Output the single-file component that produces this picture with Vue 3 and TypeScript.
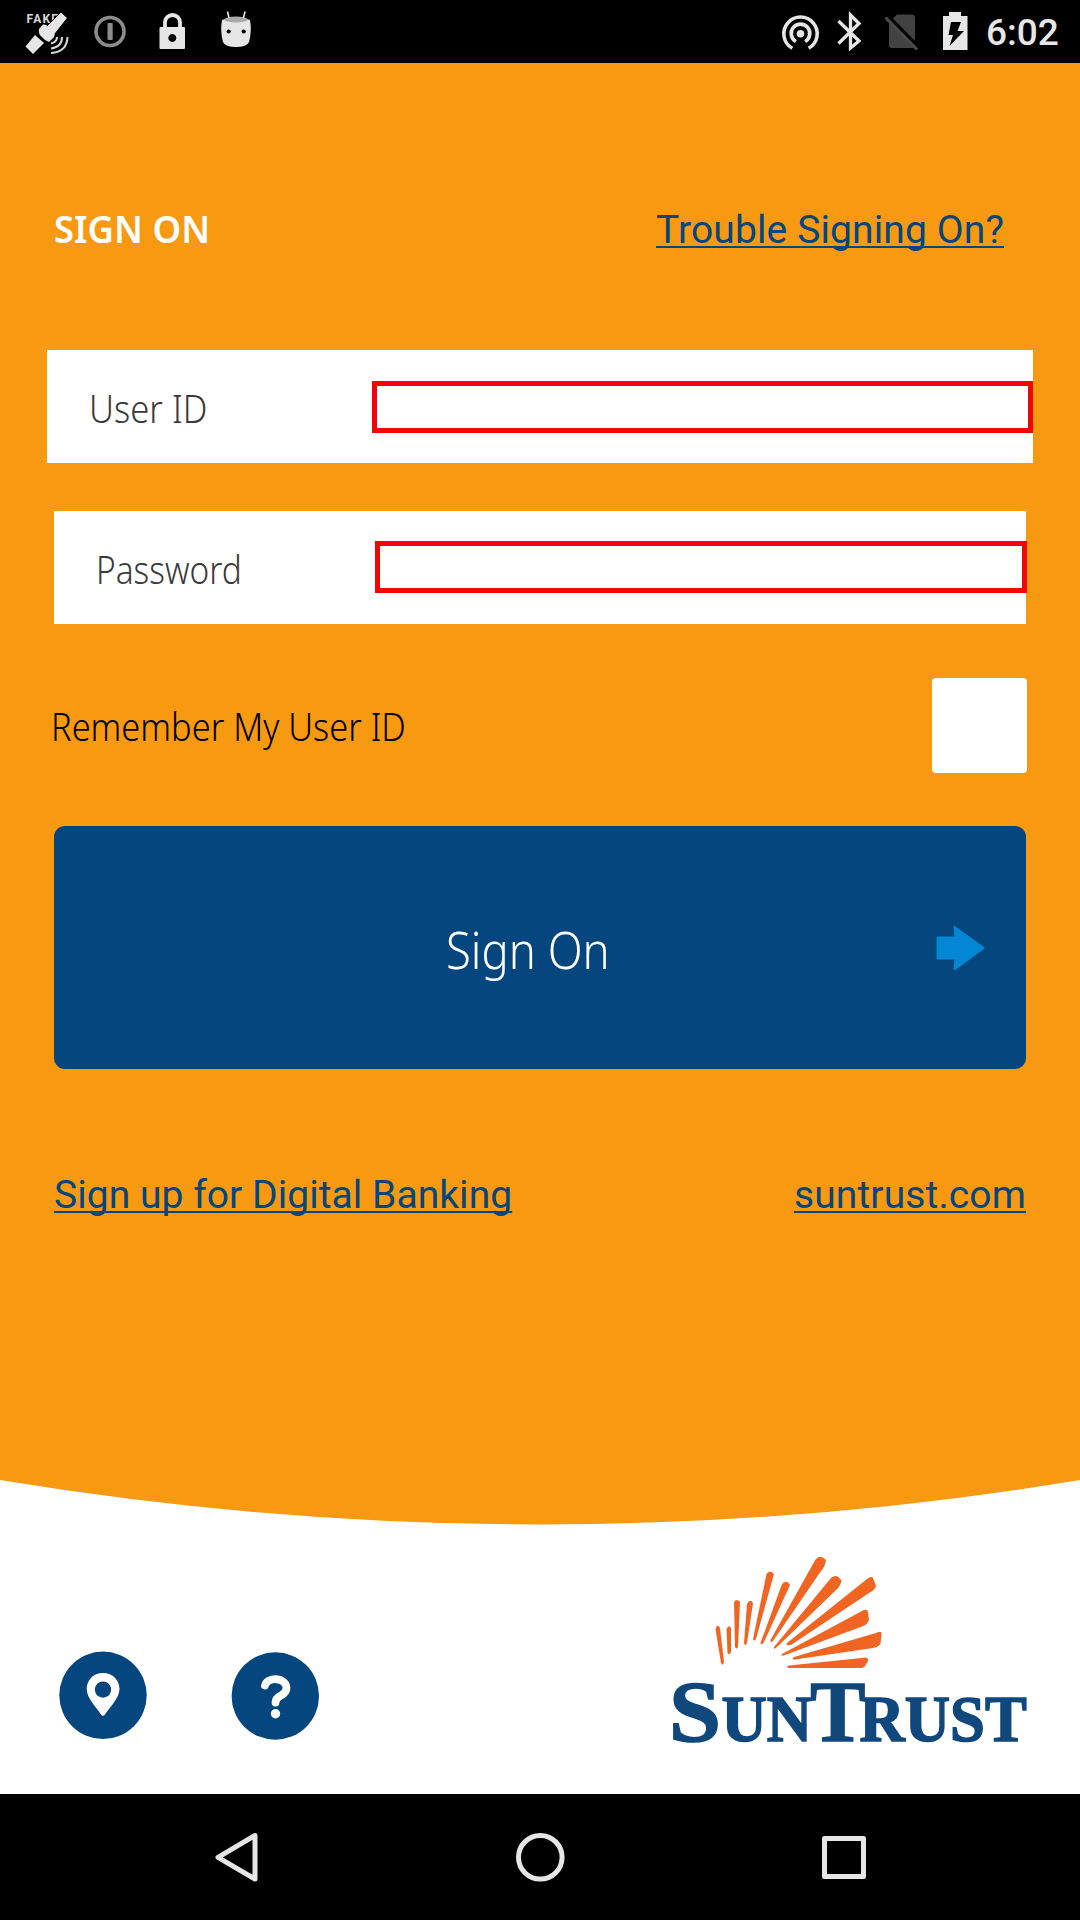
<script setup lang="ts">
interface Ray { d: string }

const rays: Ray[] = [
  { d: 'M715.5 1629 Q717 1623 720 1628 L724 1662 Q723 1667 721 1663Z' },
  { d: 'M726.5 1629 Q729 1624 731 1628 L731 1652 Q729 1656 727.500 1653Z' },
  { d: 'M734 1602 Q737 1598 740 1602 L738 1647 Q736.500 1650 735 1647Z' },
  { d: 'M747 1604 Q750 1598 753 1603 L747 1643 Q745 1647 744 1643Z' },
  { d: 'M766.500 1574 Q770 1569 774 1574 L756 1639 Q754 1642 753 1639Z' },
  { d: 'M782 1584 Q787 1579 790 1585 L764 1642 Q761 1646 760.500 1643Z' },
  { d: 'M815.500 1559.500 Q820 1554 826 1560 Q825 1567 821 1571 L773 1641 Q770 1644 770.500 1640Z' },
  { d: 'M831 1578 Q837 1573 841.500 1581 Q840 1587 835 1591 L778 1646 Q773 1651 774 1647Z' },
  { d: 'M867 1579 Q871 1575.500 873 1578 L876 1586 Q875 1590 869 1593 L791 1645 Q785 1646 787 1643Z' },
  { d: 'M862 1611 Q867 1608 868 1612 L869 1620 Q867 1625 862 1626.500 L785 1655 Q780 1657 782 1654Z' },
  { d: 'M876 1633 Q882 1630 881.500 1634 L880.500 1644 Q878 1647 873 1648 L795 1659.500 Q791 1660 794 1657Z' },
  { d: 'M862 1658 Q869 1656 868 1661 L865 1666 Q864 1668 860 1668 L789 1668 Q785 1667 789 1665.500Z' },
]
</script>

<template>
  <main class="screen">
    <header class="status">
      <svg class="status-icons" width="1080" height="63" viewBox="0 0 1080 63">
        <text x="26.500" y="23" class="fake">FAKE</text>
        <g fill="#e6e6e6">
          <path d="M61 12 L67.500 18 L54 35 L46 27Z" stroke="#000" stroke-width="1" />
          <path d="M43 24.500 Q47 24 51 29 Q56 34 54 37 L49 42 Q44 40 42 37 Q38 34 39 29Z" />
          <path d="M35 35 L44 43 L33 54 L25.500 46.500Z" />
        </g>
        <g fill="none" stroke="#d8d8d8" stroke-width="2">
          <path d="M57 37 Q57 42 51 43.500" />
          <path d="M62 37 Q62 47 51 48.500" />
          <path d="M67.500 37 Q67 52 51 53" />
        </g>
        <circle cx="110" cy="31.500" r="14" fill="none" stroke="#8c8c8c" stroke-width="3.600" />
        <rect x="107.500" y="23" width="5.200" height="17" rx="1" fill="#8c8c8c" />
        <path d="M165 28 V22.500 a7.500 7.500 0 0 1 15 0 V28" fill="none" stroke="#e6e6e6" stroke-width="3.800" />
        <path fill="#e6e6e6" fill-rule="evenodd" d="M161 27 H184 Q185 27 185 28 V48 Q185 49 184 49 H160.500 Q159.500 49 159.500 48 V28 Q159.500 27 161 27Z M172.300 34 a4 4 0 1 0 .01 0Z" />
        <path d="M222 20 Q236 14 250 20 Q252 31 249 42 Q247 47 236 47 Q225 47 223 42 Q220 31 222 20Z" fill="#e6e6e6" />
        <ellipse cx="236" cy="19.500" rx="12" ry="3" fill="#a9a9a9" />
        <path d="M229 18 L227.500 11.500 M243.500 18 L245 11.500" stroke="#e6e6e6" stroke-width="1.600" />
        <circle cx="228.700" cy="31.500" r="2.100" />
        <circle cx="243.700" cy="31.500" r="2.100" />
        <g fill="none" stroke="#e6e6e6" stroke-width="3.600">
          <path d="M792.300 48.300 A16.700 16.700 0 1 1 808.700 48.300" />
          <path d="M795.900 41.500 A9.300 9.300 0 1 1 805.100 41.500" />
        </g>
        <circle cx="800.500" cy="33.700" r="3.800" fill="#e6e6e6" />
        <path d="M838.500 21 L859 41 L850.500 48 V15 L859 23.500 L838.500 43.500" fill="none" stroke="#e6e6e6" stroke-width="3.300" />
        <path d="M897 14.500 H912 Q915 14.500 915 18 V45 Q915 48 911 48 H892 Q889 48 889 45 V22Z" fill="#424242" />
        <path d="M889 17 L918.500 47" stroke="#000" stroke-width="3.500" />
        <path d="M885.500 17.500 L917 49.500" stroke="#4b4b4b" stroke-width="3" />
        <path d="M949 12 H961 V16 H967.500 V50 H943 V16 H949Z" fill="#e6e6e6" />
        <path d="M951 22 H961 L957.500 31 H964 L949.500 46 L953 35 H948.500Z" fill="#000" />
      </svg>
      <span class="clock">6:02</span>
    </header>

    <section class="login">
      <div class="heading">
        <h1>SIGN ON</h1>
        <a class="link trouble">Trouble Signing On?</a>
      </div>
      <label class="field user"><span>User ID</span><i class="entry"></i></label>
      <label class="field pass"><span>Password</span><i class="entry"></i></label>
      <div class="remember"><span>Remember My User ID</span><i class="check"></i></div>
      <button class="submit">
        <span>Sign On</span>
        <svg class="arrow" width="50" height="46" viewBox="935 925 50 46">
          <path d="M938 936.500 H954.500 L953.500 926 Q954 925 955.500 926.500 L984 947 Q985 948 984 949 L956 969.500 Q954 971 953.500 969 L954.500 959.500 H938 Q936.500 959.500 936.500 958 V938 Q936.500 936.500 938 936.500Z" fill="#0386d3" />
        </svg>
      </button>
      <nav class="links">
        <a class="link signup">Sign up for Digital Banking</a>
        <a class="link site">suntrust.com</a>
      </nav>
    </section>

    <footer class="footer">
      <svg width="1080" height="314" viewBox="0 1480 1080 314">
        <path d="M0 1480 H1080 Q540 1569 0 1480Z" fill="#f89912" />
        <circle cx="103" cy="1695.300" r="43.700" fill="#04467d" />
        <path fill="#fff" fill-rule="evenodd" d="M103 1673 C93 1673 86.700 1680.500 86.700 1689 C86.700 1698 96 1707 101 1714.500 Q103 1717 105 1714.500 C110 1707 119.500 1698 119.500 1689 C119.500 1680.500 113 1673 103 1673Z M103 1681.500 a8.100 8.100 0 1 1 -.01 0Z" />
        <circle cx="275.300" cy="1696" r="43.700" fill="#04467d" />
        <path d="M265 1685.500 C267 1676.500 286.500 1677 286.500 1688 C286.500 1697 275.500 1694 275.500 1702.500" fill="none" stroke="#fff" stroke-width="7.800" stroke-linecap="round" />
        <circle cx="275.500" cy="1713.700" r="4.700" fill="#fff" />
        <path v-for="ray in rays" :key="ray.d" :d="ray.d" fill="#f16522" />
        <text class="brand" x="669" y="1741" font-size="87" textLength="52" lengthAdjust="spacingAndGlyphs">S</text>
        <text class="brand" transform="translate(721.5 1741) scale(.95 1)"><tspan font-size="66">UN</tspan><tspan dx="-2" font-size="87">T</tspan><tspan dx="-6" font-size="66">RUST</tspan></text>
      </svg>
    </footer>

    <nav class="navbar">
      <svg width="1080" height="126" viewBox="0 1794 1080 126" fill="none" stroke="#e6e6e6" stroke-width="5" stroke-linejoin="round">
        <path d="M255 1835.500 V1879 L218 1857.300Z" />
        <circle cx="540.300" cy="1857.300" r="21.800" />
        <rect x="824.500" y="1838.500" width="39" height="38" />
      </svg>
    </nav>
  </main>
</template>

<style>
body { margin: 0; }
</style>

<style scoped>
.screen { width: 1080px; height: 1920px; display: flex; flex-direction: column; background: #f89912; overflow: hidden; font-family: "Noto Sans", sans-serif; }
.screen svg { display: block; }
.status { position: relative; height: 63px; background: #000; flex: none; }
.fake { font: bold 12px Roboto, sans-serif; fill: #d8d8d8; letter-spacing: 1.2px; }
.clock { position: absolute; left: 986px; top: 11px; font: 500 37px/44px Roboto, sans-serif; color: #e6e6e6; white-space: nowrap; }
.login { height: 1417px; flex: none; display: flex; flex-direction: column; }
.heading { height: 58px; margin: 137px 76px 0 54px; display: flex; justify-content: space-between; align-items: center; }
h1 { margin: 0; color: #fff; font-size: 38px; line-height: 58px; font-weight: 600; white-space: nowrap; transform: scaleX(.96); transform-origin: 0 50%; padding-bottom: 2px; }
.link { font: 400 39px/58px Roboto, sans-serif; color: #04467d; white-space: nowrap; text-decoration: underline; text-decoration-thickness: 2px; text-underline-offset: 3px; text-decoration-skip-ink: none; }
.heading .link { padding-top: 1px; }
.trouble { letter-spacing: .12px; }
.signup { letter-spacing: .05px; }
.site { letter-spacing: .12px; }
.field { display: flex; align-items: center; justify-content: space-between; background: #fff; color: #3a3a3c; height: 113px; font-size: 38px; font-weight: 350; }
.field span, .remember span { white-space: nowrap; transform-origin: 0 50%; }
.field span { padding-top: 2px; }
.user { margin: 92px 47px 0; padding-left: 42px; }
.user span { transform: scaleX(.91); }
.pass { margin: 48px 54px 0; padding-left: 42px; }
.pass span { transform: scaleX(.88); }
.entry { box-sizing: border-box; height: 52px; border: 5px solid #f20505; }
.user .entry { width: 661px; }
.pass .entry { width: 652px; margin-right: -1px; margin-bottom: 2px; }
.remember { display: flex; align-items: center; justify-content: space-between; height: 95px; margin: 54px 53px 0 51px; font-size: 38px; font-weight: 350; color: #000; }
.remember span { transform: scaleX(.905); }
.check { width: 95px; height: 95px; border-radius: 4px; background: #fff; }
.submit { border: 0; padding: 0 41px 0 392px; margin: 53px 54px 0; height: 243px; border-radius: 11px; background: #04467d; color: #fff; display: flex; align-items: center; justify-content: space-between; font: 350 52px/70px "Noto Sans", sans-serif; }
.submit span { white-space: nowrap; transform: scaleX(.875); transform-origin: 0 50%; padding-top: 2px; }
.links { display: flex; justify-content: space-between; margin: 97px 54px 0; }
.footer { height: 314px; background: #fff; flex: none; }
.brand { font-family: "Liberation Serif", serif; font-weight: 700; fill: #10477d; stroke: #10477d; stroke-width: 1.6px; }
.navbar { height: 126px; background: #000; flex: none; }
</style>
